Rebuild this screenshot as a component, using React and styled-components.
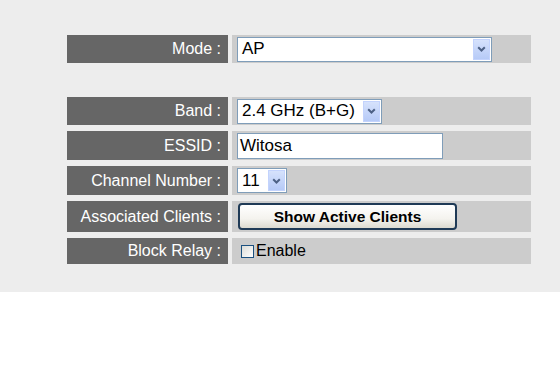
import styled, { createGlobalStyle } from "styled-components";

const GlobalStyle = createGlobalStyle`
  html, body {
    margin: 0;
    padding: 0;
    background: #ffffff;
    font-family: "Liberation Sans", Arial, sans-serif;
  }
`;

const Page = styled.div`
  background: #ededed;
  height: 292px;
  padding: 35px 0 0 67px;
  box-sizing: border-box;
`;

const Form = styled.div`
  display: grid;
  grid-template-columns: 161px 299px;
  grid-template-rows: 28px 22px 28px 29px 29px 31px 26px;
  column-gap: 4px;
  row-gap: 6px;
`;

const Spacer = styled.div`
  grid-column: 1 / span 2;
`;

const Label = styled.div`
  background: #666666;
  color: #ffffff;
  font-size: 16px;
  display: flex;
  align-items: center;
  justify-content: flex-end;
  padding-right: 7px;
  white-space: nowrap;
`;

const Value = styled.div`
  background: #cccccc;
  display: flex;
  align-items: center;
  padding-left: 5px;
`;

const SelectBox = styled.div`
  width: ${(p) => p.$width}px;
  height: 25px;
  box-sizing: border-box;
  background: #ffffff;
  border: 1px solid #7f9db9;
  display: flex;
  align-items: center;
  justify-content: space-between;
  font-size: 17px;
  color: #000;
  padding: 1px 1px 1px 4px;
  white-space: nowrap;
`;

const ArrowButton = styled.span`
  width: 17px;
  height: 21px;
  flex: none;
  background: linear-gradient(#d6e2fc, #b6caf7);
  border: 1px solid #c3d3fd;
  box-sizing: border-box;
  display: flex;
  align-items: center;
  justify-content: center;
`;

const TextInput = styled.div`
  width: 206px;
  height: 26px;
  box-sizing: border-box;
  background: #ffffff;
  border: 1px solid #7f9db9;
  font-size: 17px;
  display: flex;
  align-items: center;
  padding-left: 2px;
`;

const Button = styled.div`
  width: 219px;
  height: 27px;
  margin-left: 1px;
  box-sizing: border-box;
  border: 2px solid #1f3a56;
  border-radius: 4px;
  background: linear-gradient(#ffffff, #f4f3ee 60%, #dcdad0);
  font-size: 15.5px;
  font-weight: bold;
  display: flex;
  align-items: center;
  justify-content: center;
`;

const Check = styled.span`
  width: 13px;
  height: 13px;
  box-sizing: border-box;
  border: 1px solid #1c5180;
  background: linear-gradient(135deg, #dcdcd7, #ffffff);
  margin: 0 2px 0 4px;
`;

const CheckLabel = styled.span`
  font-size: 16px;
  color: #000;
`;

const Chevron = () => (
  <svg width="9" height="6" viewBox="0 0 9 6">
    <path d="M1.2 1.2 L4.5 4.5 L7.8 1.2" fill="none" stroke="#4d6185" strokeWidth="2" />
  </svg>
);

const Select = ({ width, value }) => (
  <SelectBox $width={width}>
    <span>{value}</span>
    <ArrowButton>
      <Chevron />
    </ArrowButton>
  </SelectBox>
);

const App = () => (
  <>
    <GlobalStyle />
    <Page>
      <Form>
        <Label>Mode :</Label>
        <Value>
          <Select width={255} value="AP" />
        </Value>
        <Spacer />
        <Label>Band :</Label>
        <Value>
          <Select width={145} value="2.4 GHz (B+G)" />
        </Value>
        <Label>ESSID :</Label>
        <Value>
          <TextInput>Witosa</TextInput>
        </Value>
        <Label>Channel Number :</Label>
        <Value>
          <Select width={50} value="11" />
        </Value>
        <Label>Associated Clients :</Label>
        <Value>
          <Button>Show Active Clients</Button>
        </Value>
        <Label>Block Relay :</Label>
        <Value>
          <Check />
          <CheckLabel>Enable</CheckLabel>
        </Value>
      </Form>
    </Page>
  </>
);

export default App;
